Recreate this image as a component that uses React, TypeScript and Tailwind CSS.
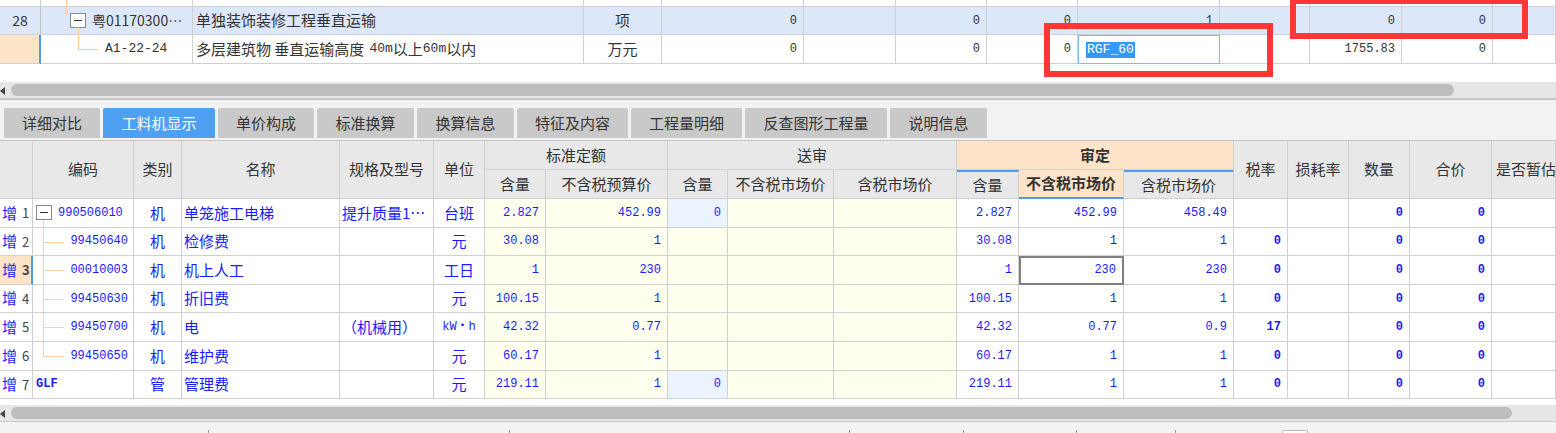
import React from "react";

const SANS = "font-['Noto_Sans_CJK_SC','Noto_Sans',sans-serif]";
const MONO = "font-['Liberation_Mono','Noto_Sans_CJK_SC',monospace]";

// top grid (清单 rows)
const TOP_COLS =
  "grid-cols-[41px_152px_391px_78px_142px_92px_91px_91px_142px_90px_92px_91px_63px]";

// bottom grid (工料机)
const LOW_COLS =
  "grid-cols-[33px_101px_48px_158px_94px_51px_61px_122px_60px_106px_123px_62px_105px_110px_54px_61px_61px_82px_64px]";

const tabs = ["详细对比", "工料机显示", "单价构成", "标准换算", "换算信息", "特征及内容", "工程量明细", "反查图形工程量", "说明信息"];
const tabW = ["w-[96px]", "w-[112px]", "w-[96px]", "w-[97px]", "w-[97px]", "w-[111px]", "w-[111px]", "w-[142px]", "w-[97px]"];

interface Row {
  no: number;
  code: string;
  level: 0 | 1 | 2; // 0 root with box, 1 child, 2 plain
  last?: boolean;
  type: string;
  name: string;
  spec: string;
  unit: string;
  qty: string;
  price: string;
  sendQty?: string;
  mkt: string;
  mktTax: string;
  tax: string;
}

const rows: Row[] = [
  { no: 1, code: "990506010", level: 0, type: "机", name: "单笼施工电梯", spec: "提升质量1…", unit: "台班", qty: "2.827", price: "452.99", sendQty: "0", mkt: "452.99", mktTax: "458.49", tax: "" },
  { no: 2, code: "99450640", level: 1, type: "机", name: "检修费", spec: "", unit: "元", qty: "30.08", price: "1", mkt: "1", mktTax: "1", tax: "0" },
  { no: 3, code: "00010003", level: 1, type: "机", name: "机上人工", spec: "", unit: "工日", qty: "1", price: "230", mkt: "230", mktTax: "230", tax: "0" },
  { no: 4, code: "99450630", level: 1, type: "机", name: "折旧费", spec: "", unit: "元", qty: "100.15", price: "1", mkt: "1", mktTax: "1", tax: "0" },
  { no: 5, code: "99450700", level: 1, type: "机", name: "电", spec: "（机械用）", unit: "kW・h", qty: "42.32", price: "0.77", mkt: "0.77", mktTax: "0.9", tax: "17" },
  { no: 6, code: "99450650", level: 1, last: true, type: "机", name: "维护费", spec: "", unit: "元", qty: "60.17", price: "1", mkt: "1", mktTax: "1", tax: "0" },
  { no: 7, code: "GLF", level: 2, type: "管", name: "管理费", spec: "", unit: "元", qty: "219.11", price: "1", sendQty: "0", mkt: "1", mktTax: "1", tax: "0" },
];

const cell = "border-r border-b border-[#d0d0d0] overflow-hidden whitespace-nowrap";
const hd = `${cell} border-[#c4c4c4] bg-[#e8e8e8] flex items-center justify-center text-[15px] text-[#333]`;
const num = `${MONO} text-[12px] text-right pr-[6px] flex items-center justify-end`;
const yel = "bg-[#ffffee]";

function MinusBox() {
  return (
    <span className="w-[16px] h-[15px] border border-[#888] bg-white flex items-center justify-center shrink-0">
      <span className="w-[8px] h-[1px] bg-[#333]" />
    </span>
  );
}

function TopSection() {
  return (
    <div className={`grid ${TOP_COLS} text-[#333] ${SANS}`}>
      {/* partial previous row */}
      {Array.from({ length: 13 }).map((_, i) => (
        <div key={"p" + i} className={`${cell} h-[7px] relative`}>
          {i === 1 && <span className="absolute left-[25px] top-0 h-[7px] w-px bg-[#fcc995]" />}
        </div>
      ))}

      {/* row 28 */}
      <div className={`${cell} h-[28px] bg-[#dce8fa] flex items-center justify-center text-[14px] border-r-[#c0c0c0]`}>28</div>
      <div className={`${cell} h-[28px] bg-[#dce8fa] relative flex items-center pl-[29px] gap-[6px] text-[14px]`}>
        <span className="absolute left-[25px] top-0 h-[8px] w-px bg-[#fcc995]" />
        <span className="absolute left-[37px] top-[20px] h-[10px] w-px bg-[#fcc995]" />
        <MinusBox />
        <span>粤01170300…</span>
      </div>
      <div className={`${cell} h-[28px] bg-[#dce8fa] flex items-center pl-[3px] text-[15px]`}>单独装饰装修工程垂直运输</div>
      <div className={`${cell} h-[28px] bg-[#dce8fa] flex items-center justify-center text-[15px]`}>项</div>
      <div className={`${cell} h-[28px] bg-[#dce8fa] ${num}`}>0</div>
      <div className={`${cell} h-[28px] bg-[#dce8fa]`} />
      <div className={`${cell} h-[28px] bg-[#dce8fa] ${num}`}>0</div>
      <div className={`${cell} h-[28px] bg-[#dce8fa] ${num}`}>0</div>
      <div className={`${cell} h-[28px] bg-[#dce8fa] ${num}`}>1</div>
      <div className={`${cell} h-[28px] bg-[#dce8fa]`} />
      <div className={`${cell} h-[28px] bg-[#dce8fa] ${num}`}>0</div>
      <div className={`${cell} h-[28px] bg-[#dce8fa] ${num}`}>0</div>
      <div className={`${cell} h-[28px] bg-[#dce8fa]`} />

      {/* row A1-22-24 */}
      <div className={`${cell} h-[29px] bg-[#fde4c8] border-r-2 border-r-[#4a9af0]`} />
      <div className={`${cell} h-[29px] relative flex items-center pl-[64px] text-[13px] ${MONO}`}>
        <span className="absolute left-[37px] top-0 h-[15px] w-px bg-[#fcc995]" />
        <span className="absolute left-[37px] top-[14px] w-[20px] h-px bg-[#fcc995]" />
        A1-22-24
      </div>
      <div className={`${cell} h-[29px] flex items-center pl-[3px] text-[15px]`}>
        多层建筑物 垂直运输高度 <span className={`${MONO} text-[13px] ml-[5px]`}>40m</span>以上<span className={`${MONO} text-[13px]`}>60m</span>以内
      </div>
      <div className={`${cell} h-[29px] flex items-center justify-center text-[15px]`}>万元</div>
      <div className={`${cell} h-[29px] ${num}`}>0</div>
      <div className={`${cell} h-[29px]`} />
      <div className={`${cell} h-[29px] ${num}`}>0</div>
      <div className={`${cell} h-[29px] ${num}`}>0</div>
      <div className="h-[29px] border border-[#8bb8ec] flex items-center pl-[7px] overflow-hidden">
        <span className={`${MONO} text-[13px] bg-[#3399ff] text-white leading-[16px] px-px`}>RGF_60</span>
      </div>
      <div className={`${cell} h-[29px]`} />
      <div className={`${cell} h-[29px] ${num}`}>1755.83</div>
      <div className={`${cell} h-[29px] ${num}`}>0</div>
      <div className={`${cell} h-[29px]`} />
    </div>
  );
}

function ScrollBar({ thumb }: { thumb: string }) {
  return (
    <div className="h-[17px] bg-[#e6e6e6] border-b border-[#c8c8c8] flex items-center relative">
      <span className="absolute left-0 top-[5px] w-0 h-0 border-y-[4px] border-y-transparent border-r-[5px] border-r-[#444]" />
      <div className={`ml-[11px] h-[12px] rounded-full bg-[#bdbdbd] ${thumb}`} />
    </div>
  );
}

function Tabs() {
  return (
    <div className={`bg-[#f2f2f2] pt-[8px] pb-[2px] pl-[4px] flex gap-[3px] ${SANS}`}>
      {tabs.map((t, i) => (
        <div
          key={t}
          className={`${tabW[i]} h-[30px] rounded-t-[2px] flex items-center justify-center text-[15px] ${
            i === 1 ? "bg-[#4da0f2] text-white" : "bg-[#c9c9c9] text-[#333]"
          }`}
        >
          {t}
        </div>
      ))}
    </div>
  );
}

function Header() {
  return (
    <div className={`grid ${LOW_COLS} grid-rows-[29px_29px] border-t border-[#c4c4c4] ${SANS}`}>
      <div className={`${hd} row-span-2`} />
      <div className={`${hd} row-span-2`}>编码</div>
      <div className={`${hd} row-span-2`}>类别</div>
      <div className={`${hd} row-span-2`}>名称</div>
      <div className={`${hd} row-span-2`}>规格及型号</div>
      <div className={`${hd} row-span-2`}>单位</div>
      <div className={`${hd} col-span-2`}>标准定额</div>
      <div className={`${hd} col-span-3`}>送审</div>
      <div className={`${hd} col-span-3 bg-[#fde4c8] font-bold text-[#222]`}>审定</div>
      <div className={`${hd} row-span-2`}>税率</div>
      <div className={`${hd} row-span-2`}>损耗率</div>
      <div className={`${hd} row-span-2`}>数量</div>
      <div className={`${hd} row-span-2`}>合价</div>
      <div className={`${hd} row-span-2 justify-start pl-[4px]`}>是否暂估</div>

      <div className={hd}>含量</div>
      <div className={hd}>不含税预算价</div>
      <div className={hd}>含量</div>
      <div className={hd}>不含税市场价</div>
      <div className={hd}>含税市场价</div>
      <div className={`${hd} border-t-2 border-t-[#4a9af0]`}>含量</div>
      <div className={`${hd} bg-[#fde4c8] font-bold text-[#111] border-b-2 border-b-[#4a9af0]`}>不含税市场价</div>
      <div className={`${hd} border-t-2 border-t-[#4a9af0]`}>含税市场价</div>
    </div>
  );
}

function CodeCell({ r }: { r: Row }) {
  const line = "absolute bg-[#fcd3a5]";
  if (r.level === 0) {
    return (
      <div className={`${cell} relative flex items-center pl-[3px] gap-[6px] text-[#1a1aff]`}>
        <MinusBox />
        <span className={`${MONO} text-[12px]`}>{r.code}</span>
        <span className={`${line} left-[10px] top-[21px] bottom-0 w-px`} />
      </div>
    );
  }
  if (r.level === 1) {
    return (
      <div className={`${cell} relative flex items-center justify-end pr-[5px] text-[#1a1aff]`}>
        <span className={`${line} left-[10px] top-0 w-px ${r.last ? "h-[14px]" : "bottom-0"}`} />
        <span className={`${line} left-[10px] top-[14px] w-[21px] h-px`} />
        <span className={`${MONO} text-[12px]`}>{r.code}</span>
      </div>
    );
  }
  return (
    <div className={`${cell} flex items-center pl-[3px] text-[#1a1aff]`}>
      <span className={`${MONO} text-[12px] font-bold`}>{r.code}</span>
    </div>
  );
}

function DataRows() {
  return (
    <div className={`grid ${LOW_COLS} auto-rows-[28.6px] text-[#1a1aff] ${SANS}`}>
      {rows.map((r) => {
        const sel = r.no === 3;
        return (
          <React.Fragment key={r.no}>
            <div
              className={`${cell} flex items-center pl-[2px] gap-[5px] text-[15px] ${
                sel ? "bg-[#fde4c8] border-r-2 border-r-[#4a9af0]" : ""
              }`}
            >
              <span>增</span>
              <span className={`text-[13px] text-[#444] ${sel ? "font-bold" : ""}`}>{r.no}</span>
            </div>
            <CodeCell r={r} />
            <div className={`${cell} flex items-center justify-center text-[15px]`}>{r.type}</div>
            <div className={`${cell} flex items-center pl-[2px] text-[15px]`}>{r.name}</div>
            <div className={`${cell} flex items-center pl-[2px] text-[15px]`}>{r.spec}</div>
            <div className={`${cell} flex items-center justify-center ${r.unit === "kW・h" ? `${MONO} text-[12px]` : "text-[15px]"}`}>
              {r.unit}
            </div>
            <div className={`${cell} ${yel} ${num}`}>{r.qty}</div>
            <div className={`${cell} ${yel} ${num}`}>{r.price}</div>
            <div className={`${cell} ${r.sendQty ? "bg-[#ebf3ff]" : yel} ${num}`}>{r.sendQty ?? ""}</div>
            <div className={`${cell} ${yel}`} />
            <div className={`${cell} ${yel}`} />
            <div className={`${cell} ${num}`}>{r.qty}</div>
            {sel ? (
              <div className={`border-2 border-[#808080] ${num} pr-[5px]`}>{r.mkt}</div>
            ) : (
              <div className={`${cell} ${num}`}>{r.mkt}</div>
            )}
            <div className={`${cell} ${num}`}>{r.mktTax}</div>
            <div className={`${cell} ${num} font-bold`}>{r.tax}</div>
            <div className={cell} />
            <div className={`${cell} ${num} font-bold`}>0</div>
            <div className={`${cell} ${num} font-bold`}>0</div>
            <div className={cell} />
          </React.Fragment>
        );
      })}
    </div>
  );
}

export default function App() {
  return (
    <div className="w-[1556px] h-[433px] bg-white relative overflow-hidden">
      <TopSection />
      <div className="h-[18px]" />
      <ScrollBar thumb="w-[1443px]" />
      <div className="h-px bg-[#c0c0c0]" />
      <Tabs />
      <Header />
      <DataRows />
      <div className="h-[6px]" />
      <ScrollBar thumb="w-[1501px]" />
      <div className="h-[12px] bg-[#f3f3f3] flex items-end">
        <span className="ml-[208px] w-px h-[4px] bg-[#999]" />
        <span className="ml-[300px] w-px h-[4px] bg-[#999]" />
        <span className="ml-[339px] w-px h-[4px] bg-[#999]" />
        <span className="ml-[113px] w-px h-[4px] bg-[#999]" />
        <span className="ml-[112px] w-px h-[4px] bg-[#999]" />
        <span className="ml-[98px] w-px h-[4px] bg-[#999]" />
        <span className="ml-[106px] w-[26px] h-[4px] border border-b-0 border-[#bbb] bg-white rounded-t-[2px]" />
      </div>

      {/* red annotation boxes */}
      <div className="absolute left-[1290px] top-[-2px] w-[238px] h-[41px] border-[6px] border-[#ff3636]" />
      <div className="absolute left-[1044px] top-[23px] w-[229px] h-[54px] border-[6px] border-[#ff3636]" />
    </div>
  );
}
